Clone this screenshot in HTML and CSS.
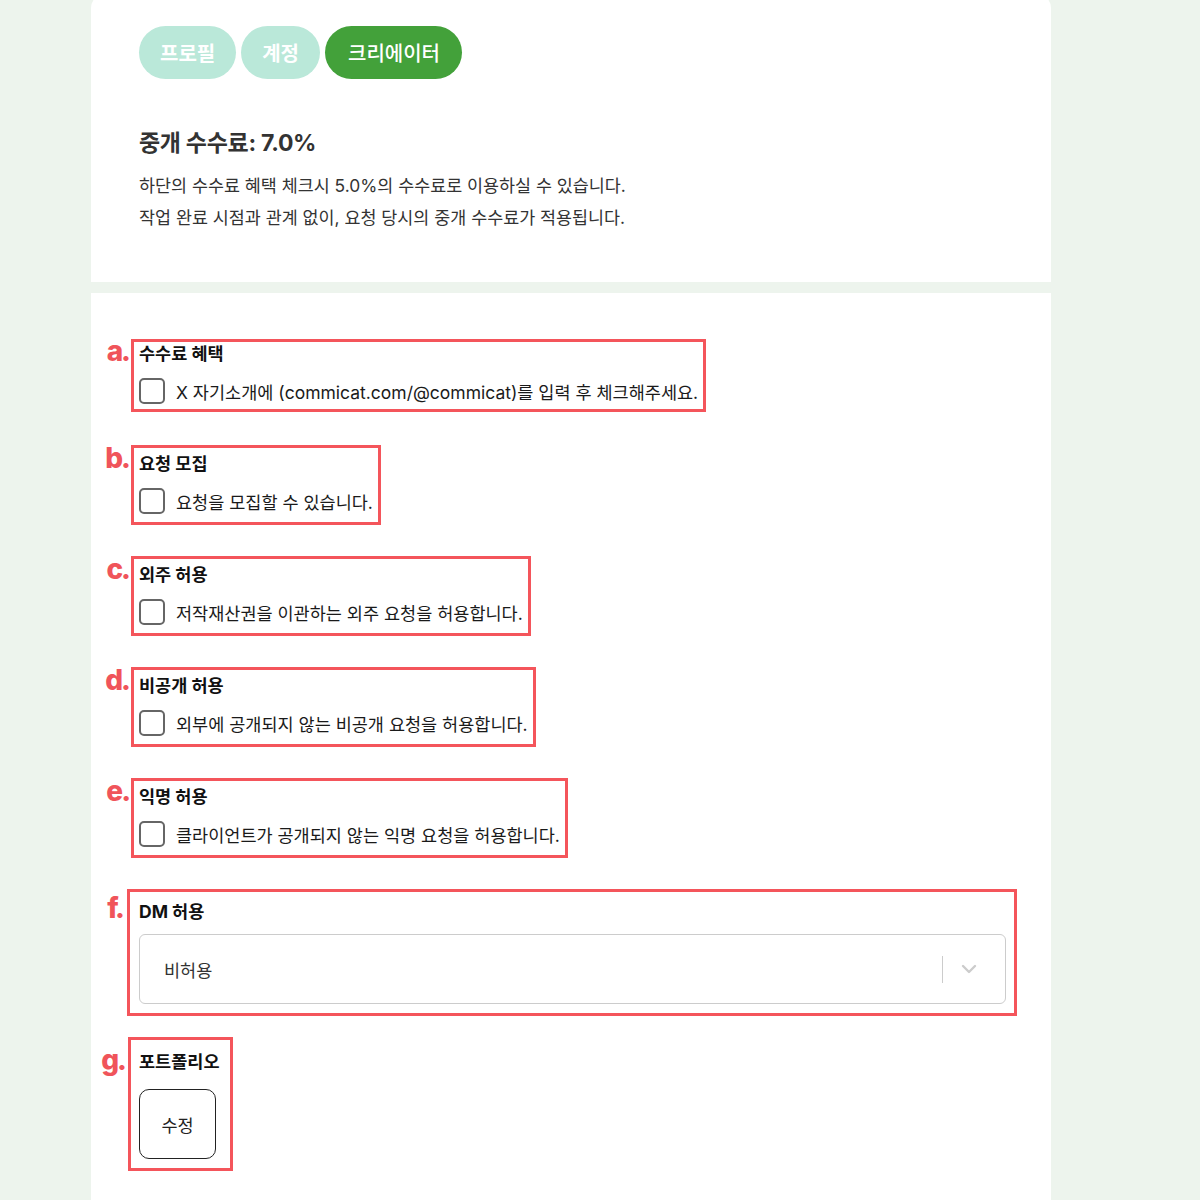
FILE: index.html
```html
<!DOCTYPE html>
<html lang="ko">
<head>
<meta charset="utf-8">
<link rel="stylesheet" href="styles.css">
</head>
<body>
<div class="page">
  <section class="card card-top">
    <nav class="tabs">
      <span class="tab">프로필</span>
      <span class="tab">계정</span>
      <span class="tab active">크리에이터</span>
    </nav>
    <h2 class="fee-title">중개 수수료: 7.0%</h2>
    <p class="fee-desc">하단의 수수료 혜택 체크시 5.0%의 수수료로 이용하실 수 있습니다.<br>작업 완료 시점과 관계 없이, 요청 당시의 중개 수수료가 적용됩니다.</p>
  </section>
  <section class="card card-form">
    <div class="field field-first">
      <span class="mark">a.</span>
      <div class="box">
        <div class="label">수수료 혜택</div>
        <label class="check"><span class="cb"></span>X 자기소개에 (commicat.com/@commicat)를 입력 후 체크해주세요.</label>
      </div>
    </div>
    <div class="field">
      <span class="mark">b.</span>
      <div class="box">
        <div class="label">요청 모집</div>
        <label class="check"><span class="cb"></span>요청을 모집할 수 있습니다.</label>
      </div>
    </div>
    <div class="field">
      <span class="mark">c.</span>
      <div class="box">
        <div class="label">외주 허용</div>
        <label class="check"><span class="cb"></span>저작재산권을 이관하는 외주 요청을 허용합니다.</label>
      </div>
    </div>
    <div class="field">
      <span class="mark">d.</span>
      <div class="box">
        <div class="label">비공개 허용</div>
        <label class="check"><span class="cb"></span>외부에 공개되지 않는 비공개 요청을 허용합니다.</label>
      </div>
    </div>
    <div class="field">
      <span class="mark">e.</span>
      <div class="box">
        <div class="label">익명 허용</div>
        <label class="check"><span class="cb"></span>클라이언트가 공개되지 않는 익명 요청을 허용합니다.</label>
      </div>
    </div>
    <div class="field field-dm">
      <span class="mark">f.</span>
      <div class="box box-wide">
        <div class="label label-dm">DM 허용</div>
        <div class="select">
          <span class="select-value">비허용</span>
          <span class="select-sep"></span>
          <svg class="chev" width="20" height="20" viewBox="0 0 20 20"><polyline points="4,7 10,13 16,7" fill="none" stroke="#cccccc" stroke-width="2.4" stroke-linecap="round" stroke-linejoin="round"/></svg>
        </div>
      </div>
    </div>
    <div class="field field-port">
      <span class="mark">g.</span>
      <div class="box box-port">
        <div class="label label-port">포트폴리오</div>
        <button class="edit-btn">수정</button>
      </div>
    </div>
  </section>
</div>
</body>
</html>
```

FILE: styles.css
```css
* { box-sizing: border-box; }
html, body { margin: 0; padding: 0; }
body {
  background: #edf4ed;
  font-family: Inter, "Noto Sans CJK KR", sans-serif;
  color: #222;
}
.page {
  width: 960px;
  margin-left: 91px;
  margin-top: -6px;
}
.card { background: #fff; }
.card-top {
  border-radius: 14px 14px 0 0;
  padding: 32px 48px 30px;
  height: 288px;
}
.tabs { display: flex; gap: 5px; }
.tab {
  height: 53px;
  padding: 0 21px;
  border-radius: 27px;
  background: #bae8d9;
  color: #fff;
  font-size: 20px;
  font-weight: 700;
  display: flex;
  align-items: center;
}
.tab.active { background: #43a13a; font-weight: 500; padding: 0 22px 0 23px; }
.fee-title {
  margin: 49px 0 0;
  font-size: 23px;
  line-height: 30px;
  font-weight: 700;
  color: #333;
  letter-spacing: -0.3px;
}
.fee-desc {
  margin: 12px 0 0;
  font-size: 17.4px;
  line-height: 32px;
  color: #333;
}
.card-form {
  margin-top: 11px;
  padding: 46px 0 40px;
  min-height: 920px;
}
.field {
  display: flex;
  align-items: flex-start;
  margin-bottom: 31px;
}
.mark {
  width: 40px;
  text-align: right;
  padding-right: 2px;
  color: #f0545a;
  font-family: Inter, sans-serif;
  font-weight: 800;
  font-size: 28px;
  line-height: 26px;
  letter-spacing: -2px;
  margin-top: 0;
}
.box {
  border: 3px solid #f4555b;
  padding: 4px 5px 7px 5px;
}
.field-first { margin-bottom: 33px; }
.field-first .box { padding-top: 0; padding-bottom: 4px; }
.field-first .mark { margin-top: -1px; }
.label {
  font-size: 17.5px;
  font-weight: 700;
  line-height: 24px;
  color: #111;
}
.check {
  display: flex;
  align-items: center;
  gap: 11px;
  margin-top: 11px;
  height: 28px;
  font-size: 17.5px;
  color: #1a1a1a;
}
.cb {
  width: 26px;
  height: 26px;
  border: 2px solid #666;
  border-radius: 5px;
  flex: none;
}
.field-dm { margin-bottom: 21px; }
.field-dm .mark { width: 36px; padding-right: 4px; margin-top: 6px; }
.box-wide {
  width: 890px;
  padding: 7px 8px 9px 9px;
}
.label-dm { line-height: 26px; }
.select {
  margin-top: 9px;
  height: 70px;
  border: 1px solid #cccccc;
  border-radius: 6px;
  display: flex;
  align-items: center;
  padding: 0 26px 0 24px;
}
.select-value { flex: 1; font-size: 17.5px; color: #333; }
.select-sep {
  width: 1px;
  height: 27px;
  background: #cccccc;
  margin-right: 16px;
}
.chev { display: block; }
.field-port .mark { width: 37px; padding-right: 3px; margin-top: 10px; }
.box-port {
  width: 105px;
  padding: 9px 4px 9px 8px;
}
.label-port { line-height: 26px; }
.edit-btn {
  margin-top: 14px;
  width: 77px;
  height: 70px;
  border: 1px solid #222;
  border-radius: 10px;
  background: #fff;
  font-family: Inter, "Noto Sans CJK KR", sans-serif;
  font-size: 17.5px;
  color: #222;
  display: block;
  padding: 0;
}
```
